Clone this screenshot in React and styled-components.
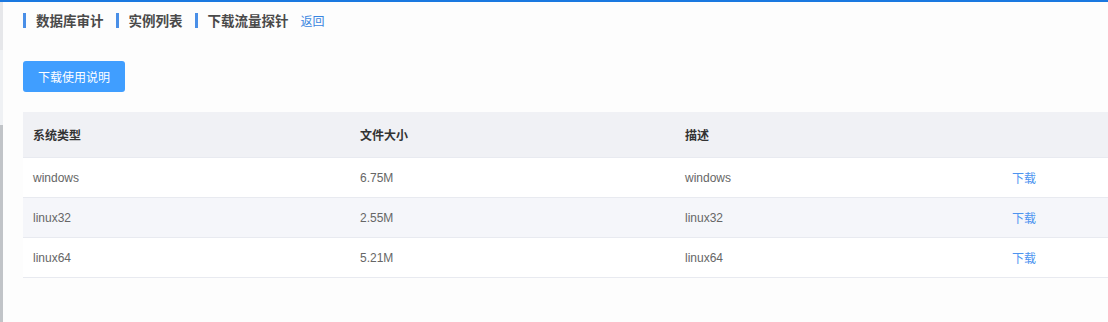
import React from 'react';
import styled, { createGlobalStyle } from 'styled-components';

const GlobalStyle = createGlobalStyle`
  html, body {
    margin: 0;
    padding: 0;
    background: #fdfdfd;
    overflow: hidden;
  }
  body {
    font-family: "Liberation Sans", "Noto Sans CJK SC", Arial, sans-serif;
  }
`;

const Page = styled.div`
  width: 1108px;
  height: 322px;
  display: flex;
  flex-direction: column;
  overflow: hidden;
`;

const TopLine = styled.div`
  height: 2px;
  background: #1a78e0;
  flex-shrink: 0;
`;

const Body = styled.div`
  flex: 1;
  display: flex;
  min-height: 0;
`;

const Strip = styled.div`
  width: 3px;
  flex-shrink: 0;
  display: flex;
  flex-direction: column;
`;

const StripPart = styled.div`
  height: ${(p) => (p.$h ? `${p.$h}px` : 'auto')};
  flex: ${(p) => (p.$h ? '0 0 auto' : '1')};
  background: ${(p) => p.$bg};
`;

const Main = styled.main`
  flex: 1;
  min-width: 0;
  padding: 10px 0 0 20px;
  background: #fdfdfd;
`;

const Crumbs = styled.nav`
  display: flex;
  align-items: center;
  height: 16px;
`;

const Crumb = styled.span`
  display: flex;
  align-items: center;
  margin-right: 12px;
  font-family: "Noto Sans CJK SC", sans-serif;
  font-size: 13.5px;
  font-weight: 700;
  color: #4a4a4a;
  line-height: 16px;

  &::before {
    content: '';
    width: 3px;
    height: 15px;
    background: #4a8fe7;
    margin-right: 10px;
  }
`;

const BackLink = styled.a`
  font-family: "Noto Sans CJK SC", sans-serif;
  font-size: 12px;
  color: #3a86e0;
  text-decoration: none;
  cursor: pointer;
`;

const Button = styled.button`
  margin-top: 33px;
  height: 31px;
  width: 102px;
  border: none;
  border-radius: 3px;
  background: #409eff;
  color: #fff;
  font-family: "Noto Sans CJK SC", sans-serif;
  font-size: 12px;
  padding: 0;
  cursor: pointer;
`;

const Table = styled.div`
  margin-top: 20px;
  width: 1310px;
  display: flex;
  flex-direction: column;
`;

const Row = styled.div`
  display: grid;
  grid-template-columns: 327px 325px 327px 1fr;
  height: ${(p) => (p.$head ? 46 : 40)}px;
  box-sizing: border-box;
  border-bottom: 1px solid #e8eaf0;
  background: ${(p) => (p.$head ? '#f0f1f5' : p.$stripe ? '#f5f6fa' : '#ffffff')};
`;

const Cell = styled.div`
  display: flex;
  align-items: center;
  padding-left: 10px;
  font-size: 12px;
  color: ${(p) => (p.$head ? '#333' : '#666')};
  font-weight: ${(p) => (p.$head ? 700 : 400)};
  font-family: ${(p) =>
    p.$head ? '"Noto Sans CJK SC", sans-serif' : '"Liberation Sans", "Noto Sans CJK SC", sans-serif'};
`;

const DownloadLink = styled.a`
  font-family: "Noto Sans CJK SC", sans-serif;
  font-size: 12px;
  color: #4d94f0;
  text-decoration: none;
  cursor: pointer;
`;

const rows = [
  { os: 'windows', size: '6.75M', desc: 'windows' },
  { os: 'linux32', size: '2.55M', desc: 'linux32' },
  { os: 'linux64', size: '5.21M', desc: 'linux64' },
];

export default function App() {
  return (
    <>
      <GlobalStyle />
      <Page>
        <TopLine />
        <Body>
          <Strip>
            <StripPart $h={48} $bg="#e6e7ea" />
            <StripPart $h={75} $bg="#eff1f4" />
            <StripPart $bg="#c1c4c8" />
          </Strip>
          <Main>
            <Crumbs>
              <Crumb>数据库审计</Crumb>
              <Crumb>实例列表</Crumb>
              <Crumb>下载流量探针</Crumb>
              <BackLink>返回</BackLink>
            </Crumbs>
            <Button>下载使用说明</Button>
            <Table>
              <Row $head>
                <Cell $head>系统类型</Cell>
                <Cell $head>文件大小</Cell>
                <Cell $head>描述</Cell>
                <Cell $head />
              </Row>
              {rows.map((r, i) => (
                <Row key={r.os} $stripe={i % 2 === 1}>
                  <Cell>{r.os}</Cell>
                  <Cell>{r.size}</Cell>
                  <Cell>{r.desc}</Cell>
                  <Cell>
                    <DownloadLink>下载</DownloadLink>
                  </Cell>
                </Row>
              ))}
            </Table>
          </Main>
        </Body>
      </Page>
    </>
  );
}
